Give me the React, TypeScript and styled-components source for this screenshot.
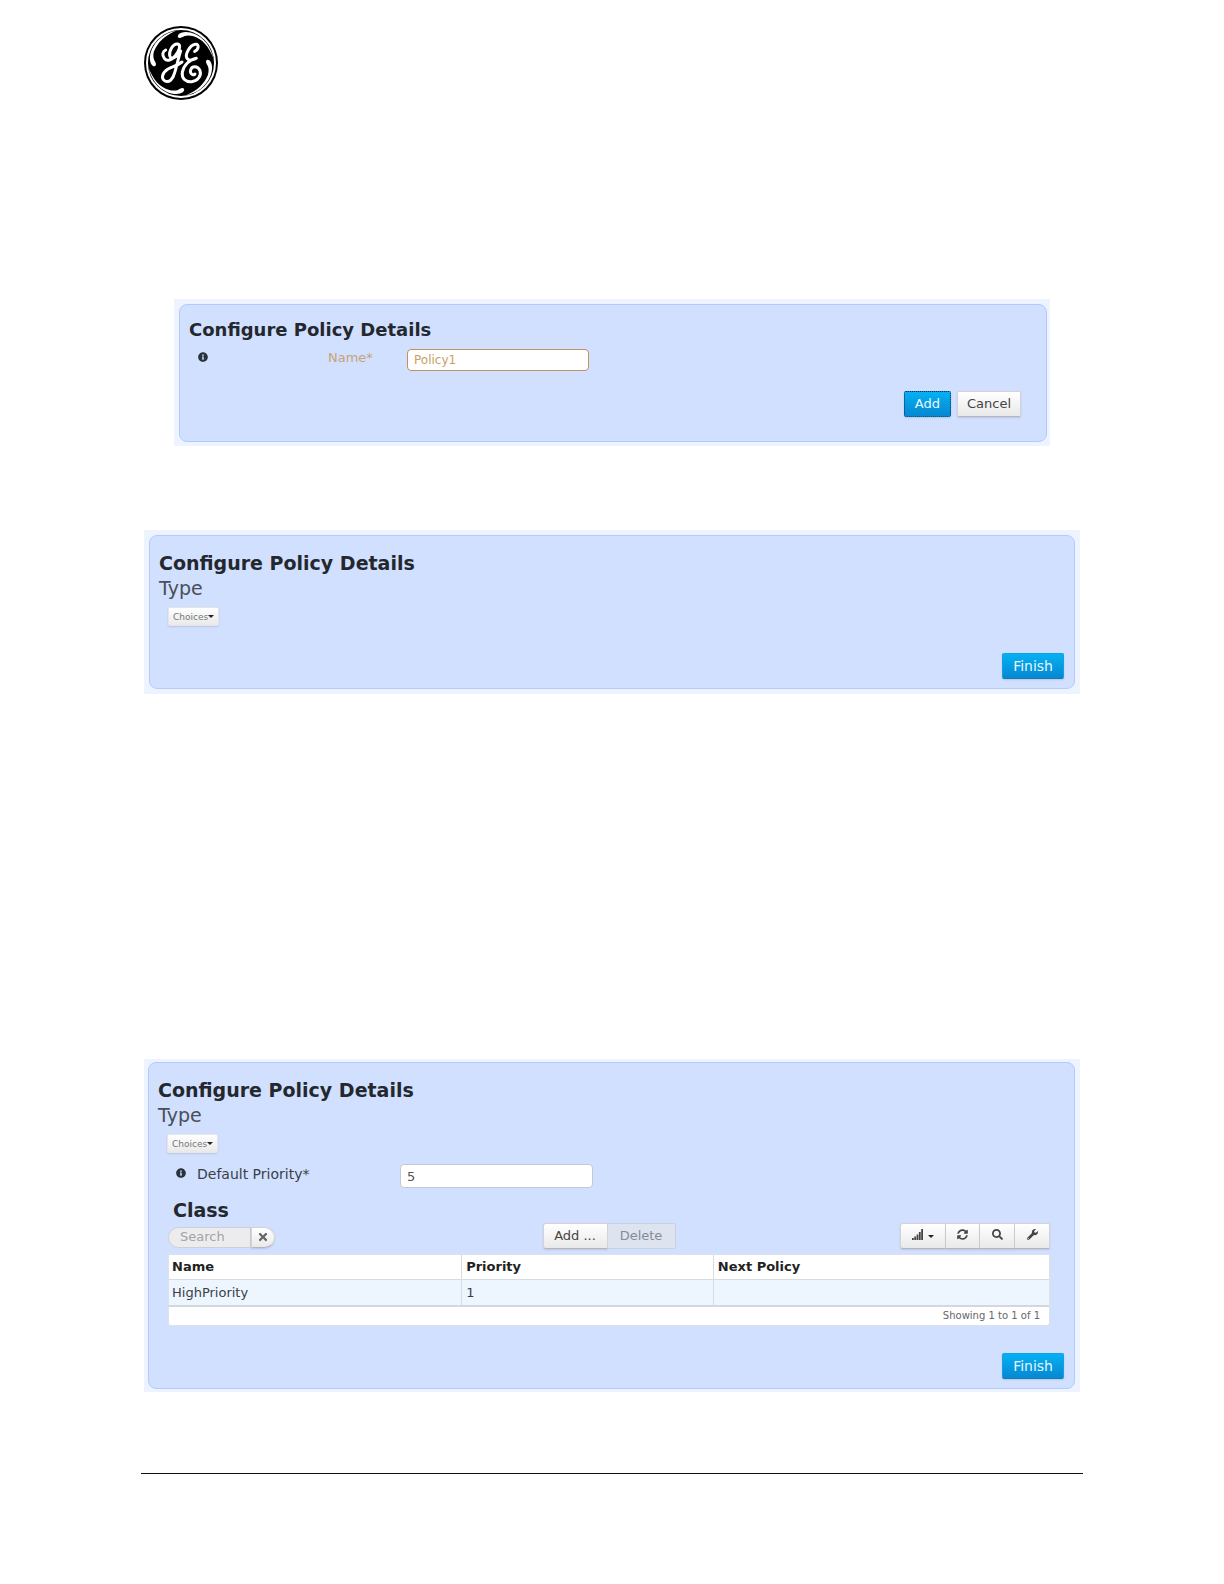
import React, { useState } from "react";
import styled, { createGlobalStyle, css } from "styled-components";
import { FaInfoCircle, FaSearch, FaWrench, FaSyncAlt, FaTimes } from "react-icons/fa";

const GlobalStyle = createGlobalStyle`
  *, *::before, *::after { box-sizing: border-box; }
  body {
    margin: 0;
    background: #fff;
    color: #333;
    font-family: "DejaVu Sans", Verdana, sans-serif;
    font-size: 13px;
    line-height: 20px;
  }
  button, input { font: inherit; margin: 0; }
`;

const Page = styled.main`
  padding: 26px 141px 110px;
`;

const Logo = styled.svg`
  display: block;
  width: 74px;
  height: 74px;
  margin-left: 3px;
`;

const Figure = styled.section<{ $top: number; $inset: number; $edge: string }>`
  margin: ${(p) => p.$top}px ${(p) => p.$inset}px 0;
  padding: ${(p) => p.$edge};
  background: #edf4ff;
`;

const Panel = styled.form<{ $compact?: boolean }>`
  padding: ${(p) => (p.$compact ? "12px 9px 24px" : "14px 10px 9px 9px")};
  border: 1px solid #b3cbfb;
  border-radius: 8px;
  background: #d1e0ff;
`;

const Title = styled.h2<{ $small?: boolean }>`
  margin: 0;
  color: #24282e;
  font-size: ${(p) => (p.$small ? 18 : 19)}px;
  line-height: 26px;
`;

const Subtitle = styled.h3`
  margin: 0;
  color: #4a4e57;
  font-size: 19px;
  font-weight: 400;
  line-height: 25px;
`;

const GroupTitle = styled.h3`
  margin: 9px 0 0 5px;
  color: #24282e;
  font-size: 19px;
  line-height: 26px;
`;

const raised = css`
  border: 1px solid #d3d3d6;
  border-bottom-color: #b5b5bb;
  background: linear-gradient(#ffffff, #e9e9e9);
  color: #444;
  box-shadow: 0 1px 2px rgba(0, 0, 0, 0.12);
`;

const Button = styled.button<{ $primary?: boolean; $focused?: boolean; $large?: boolean }>`
  height: 26px;
  padding: 0 9px;
  border-radius: 2px;
  font-size: ${(p) => (p.$large ? 14 : 13)}px;
  line-height: 20px;
  ${raised}
  ${(p) =>
    p.$primary &&
    css`
      padding: 0 10px;
      border-color: #14a0e2 #14a0e2 #0a7fbd;
      background: linear-gradient(#05b0f5, #0688d0);
      color: #e8f7ff;
    `}
  ${(p) => p.$focused && css`border: 1px dotted #0b3550;`}
`;

const ChoicesButton = styled.button`
  display: flex;
  align-items: center;
  height: 19px;
  margin: 6px 0 0 9px;
  padding: 0 4px;
  border-radius: 2px;
  font-size: 9px;
  ${raised}
  border-color: #e6e6e8;
  color: #777;
`;

const Caret = styled.span`
  border: 3px solid transparent;
  border-top-color: #222;
  border-bottom: 0;
`;

const Actions = styled.div<{ $top: number; $right?: number }>`
  display: flex;
  justify-content: flex-end;
  gap: 6px;
  margin: ${(p) => p.$top}px ${(p) => p.$right ?? 0}px 0 0;
`;

const NameRow = styled.div`
  display: grid;
  grid-template-columns: 139px 79px 182px;
  align-items: center;
  height: 22px;
  margin-top: 5px;
`;

const PriorityRow = styled.div`
  display: grid;
  grid-template-columns: 22px 203px 193px;
  align-items: center;
  height: 24px;
  margin: 11px 0 0 7px;
`;

const InfoIcon = styled(FaInfoCircle)<{ $indent?: boolean }>`
  display: block;
  width: 10px;
  height: 10px;
  margin: 0 0 6px ${(p) => (p.$indent ? 9 : 1)}px;
  color: #28323f;
`;

const Label = styled.label<{ $warm?: boolean }>`
  margin-bottom: 4px;
  color: ${(p) => (p.$warm ? "#c9a377" : "#3a3e48")};
  font-size: ${(p) => (p.$warm ? 13 : 14)}px;
`;

const TextInput = styled.input<{ $warm?: boolean }>`
  width: 100%;
  height: ${(p) => (p.$warm ? 22 : 24)}px;
  padding: 0 6px;
  border: 1px solid ${(p) => (p.$warm ? "#c0935c" : "#c3c8d3")};
  border-radius: 4px;
  outline: 0;
  background: #fff;
  color: ${(p) => (p.$warm ? "#c9a05f" : "#555")};
  font-size: ${(p) => (p.$warm ? 12 : 13)}px;
`;

const TableArea = styled.div`
  margin: 0 14px 0 10px;
`;

const Toolbar = styled.div`
  display: grid;
  grid-template-columns: 1fr auto 1fr;
  align-items: center;
  height: 26px;
`;

const SearchGroup = styled.div`
  display: flex;
  height: 21px;
  margin-top: 2px;
`;

const SearchInput = styled.input`
  width: 83px;
  padding: 0 0 0 11px;
  border: 1px solid #cfcfd2;
  border-radius: 11px 0 0 11px;
  background: #ececee;
  color: #555;
  &::placeholder { color: #a3a3a3; opacity: 1; }
`;

const ClearButton = styled.button`
  display: grid;
  place-items: center;
  width: 24px;
  padding: 0;
  border-radius: 0 11px 11px 0;
  font-size: 12px;
  ${raised}
  color: #666;
`;

const ButtonGroup = styled.div<{ $end?: boolean }>`
  display: flex;
  justify-self: ${(p) => (p.$end ? "end" : "center")};
`;

const GroupButton = styled.button<{ $width: number }>`
  display: flex;
  align-items: center;
  justify-content: center;
  gap: 5px;
  width: ${(p) => p.$width}px;
  height: 26px;
  padding: 0;
  ${raised}
  & + & { border-left-width: 0; }
  &:first-child { border-radius: 3px 0 0 3px; }
  &:last-child { border-radius: 0 2px 2px 0; }
  &:disabled {
    background: #dee3f0;
    color: #858b99;
    box-shadow: none;
    border-color: #c9cfde;
  }
  svg { display: block; margin-bottom: 3px; }
`;

const Table = styled.table`
  width: 100%;
  margin-top: 5px;
  border-collapse: separate;
  border-spacing: 0;
  table-layout: fixed;
  background: #fff;
  border: 1px solid #dde1e8;
  border-bottom: 2px solid #d3d7de;
  border-radius: 3px 3px 0 0;
`;

const Cell = styled.td`
  height: 25px;
  padding: 0 4px;
  border-left: 1px solid #d7dbe2;
  background: #edf5ff;
  text-align: left;
  line-height: 20px;
  color: #3a3e48;
  &:first-child { border-left: 0; padding-left: 3px; }
`;

const HeadCell = styled(Cell)<{ $width?: string }>`
  width: ${(p) => p.$width ?? "auto"};
  border-bottom: 1px solid #d7dbe2;
  background: #fff;
  color: #222;
  font-weight: 700;
`;

const TableStatus = styled.p`
  margin: 0;
  padding: 0 9px;
  border: 1px solid #dde1e8;
  border-top: 0;
  border-radius: 0 0 3px 3px;
  background: #fff;
  color: #666;
  font-size: 10px;
  line-height: 18px;
  text-align: right;
`;

const Rule = styled.hr`
  height: 1px;
  margin: 81px 0 0;
  border: 0;
  background: #111;
`;

function GELogo() {
  return (
    <Logo viewBox="24 30 222 222" role="img" aria-label="GE">
      <circle cx="135" cy="141" r="111" fill="#000" />
      <circle cx="135" cy="141" r="102" fill="none" stroke="#fff" strokeWidth="6" />
      <g fill="#fff">
        <path d="M127 56C134 46 158 45 177 54C203 66 224 91 232 126C218 90 199 69 170 60C155 56 145 59 138 64C129 69 122 64 127 56Z" />
        <path d="M50 149C40 142 39 118 48 99C60 73 85 50 120 44C84 60 65 79 54 106C50 121 53 131 58 138C63 147 58 154 50 149Z" />
        <path d="M143 226C136 236 112 237 93 228C67 216 46 191 38 156C52 192 71 213 100 222C115 226 125 223 132 218C141 213 148 218 143 226Z" />
        <path d="M220 133C230 140 231 164 222 183C210 209 185 232 150 238C186 222 205 203 216 176C220 161 217 151 212 144C207 135 212 128 220 133Z" />
      </g>
      <g fill="none" stroke="#fff" strokeLinecap="round" strokeLinejoin="round" strokeWidth="9">
        <path d="M89 102C79 107 78 118 85 127C93 138 108 132 118 119C130 105 136 87 125 84C111 81 99 106 101 119C104 133 123 125 134 105C127 126 122 151 116 170C111 190 99 201 87 195C73 187 80 169 96 159C112 151 126 148 138 138" />
        <path d="M176 106C188 101 191 83 178 85C161 88 146 116 153 127C159 136 173 132 181 127C161 130 143 147 139 169C136 187 149 199 167 197C185 195 197 180 192 164C185 148 167 150 164 162C161 172 170 180 177 174" />
      </g>
    </Logo>
  );
}

function SignalIcon() {
  return (
    <svg width="11" height="11" viewBox="0 0 11 11" fill="#444" aria-hidden="true">
      <rect x="0" y="9" width="1.8" height="2" />
      <rect x="2.3" y="7.5" width="1.8" height="3.5" />
      <rect x="4.6" y="5.5" width="1.8" height="5.5" />
      <rect x="6.9" y="3" width="1.8" height="8" />
      <rect x="9.2" y="0" width="1.8" height="11" />
    </svg>
  );
}

function ChoicesMenu() {
  return (
    <ChoicesButton type="button" aria-haspopup="menu">
      Choices
      <Caret />
    </ChoicesButton>
  );
}

const policyClasses = [{ name: "HighPriority", priority: "1", next: "" }];

export default function App() {
  const [name, setName] = useState("Policy1");
  const [priority, setPriority] = useState("5");
  const [query, setQuery] = useState("");
  const count = policyClasses.length;

  return (
    <>
      <GlobalStyle />
      <Page>
        <GELogo />

        <Figure $top={199} $inset={33} $edge="5px 3px 4px 5px">
          <Panel $compact onSubmit={(e) => e.preventDefault()}>
            <Title $small>Configure Policy Details</Title>
            <NameRow>
              <InfoIcon $indent />
              <Label $warm htmlFor="policy-name">Name*</Label>
              <TextInput $warm id="policy-name" value={name} onChange={(e) => setName(e.target.value)} />
            </NameRow>
            <Actions $top={21} $right={16}>
              <Button type="submit" $primary $focused>Add</Button>
              <Button type="button">Cancel</Button>
            </Actions>
          </Panel>
        </Figure>

        <Figure $top={84} $inset={3} $edge="5px">
          <Panel onSubmit={(e) => e.preventDefault()}>
            <Title>Configure Policy Details</Title>
            <Subtitle>Type</Subtitle>
            <ChoicesMenu />
            <Actions $top={27}>
              <Button type="submit" $primary $large>Finish</Button>
            </Actions>
          </Panel>
        </Figure>

        <Figure $top={365} $inset={3} $edge="3px 5px 3px 4px">
          <Panel onSubmit={(e) => e.preventDefault()}>
            <Title>Configure Policy Details</Title>
            <Subtitle>Type</Subtitle>
            <ChoicesMenu />
            <TableArea>
              <PriorityRow>
                <InfoIcon />
                <Label htmlFor="default-priority">Default Priority*</Label>
                <TextInput id="default-priority" value={priority} onChange={(e) => setPriority(e.target.value)} />
              </PriorityRow>
              <GroupTitle>Class</GroupTitle>
              <Toolbar>
                <SearchGroup>
                  <SearchInput
                    aria-label="Search"
                    placeholder="Search"
                    value={query}
                    onChange={(e) => setQuery(e.target.value)}
                  />
                  <ClearButton type="button" aria-label="Clear search" onClick={() => setQuery("")}>
                    <FaTimes />
                  </ClearButton>
                </SearchGroup>
                <ButtonGroup>
                  <GroupButton type="button" $width={65}>Add ...</GroupButton>
                  <GroupButton type="button" $width={68} disabled>Delete</GroupButton>
                </ButtonGroup>
                <ButtonGroup $end>
                  <GroupButton type="button" $width={46} aria-label="Page size">
                    <SignalIcon />
                    <Caret />
                  </GroupButton>
                  <GroupButton type="button" $width={34} aria-label="Refresh"><FaSyncAlt size={11} /></GroupButton>
                  <GroupButton type="button" $width={35} aria-label="Find"><FaSearch size={11} /></GroupButton>
                  <GroupButton type="button" $width={35} aria-label="Settings"><FaWrench size={11} /></GroupButton>
                </ButtonGroup>
              </Toolbar>
              <Table>
                <thead>
                  <tr>
                    <HeadCell as="th" scope="col" $width="33.2%">Name</HeadCell>
                    <HeadCell as="th" scope="col" $width="28.6%">Priority</HeadCell>
                    <HeadCell as="th" scope="col">Next Policy</HeadCell>
                  </tr>
                </thead>
                <tbody>
                  {policyClasses.map((c) => (
                    <tr key={c.name}>
                      <Cell>{c.name}</Cell>
                      <Cell>{c.priority}</Cell>
                      <Cell>{c.next}</Cell>
                    </tr>
                  ))}
                </tbody>
              </Table>
              <TableStatus>Showing 1 to {count} of {count}</TableStatus>
            </TableArea>
            <Actions $top={27}>
              <Button type="submit" $primary $large>Finish</Button>
            </Actions>
          </Panel>
        </Figure>

        <Rule />
      </Page>
    </>
  );
}
